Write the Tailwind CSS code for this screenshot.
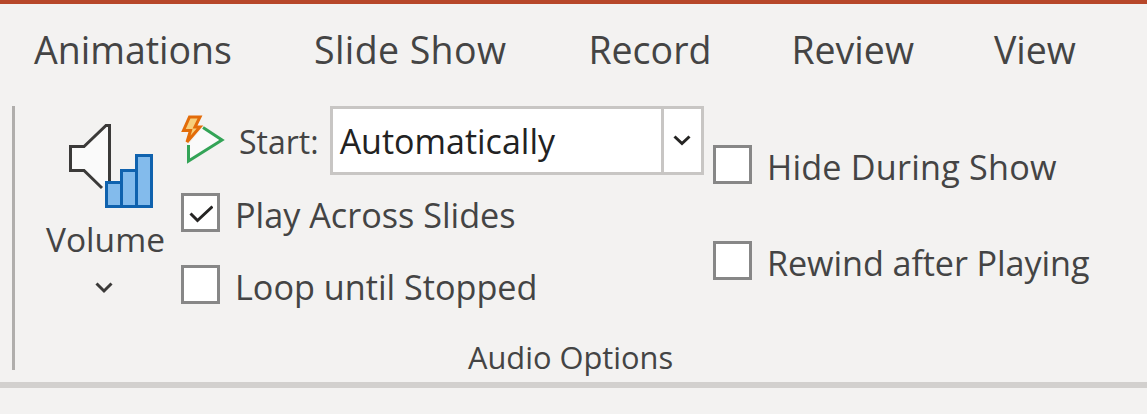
<!DOCTYPE html>
<html lang="en">
<head>
  <meta charset="UTF-8" />
  <title>Audio Options</title>
  <script src="https://cdn.jsdelivr.net/npm/@tailwindcss/browser@4"></script>
</head>
<body class="bg-[#f3f2f1] h-[414px] w-[1147px] overflow-hidden flex flex-col font-['Open_Sans',sans-serif] text-[#444444]">

  <!-- top accent -->
  <div class="h-1 bg-[#b7472a]"></div>

  <!-- tabs -->
  <nav class="h-[102px] pt-[24px] pl-[34px] flex text-[37.500px] leading-[44px]">
    <span>Animations</span>
    <span class="ml-[82px] tracking-[0.4px]">Slide Show</span>
    <span class="ml-[82px]">Record</span>
    <span class="ml-[80px]">Review</span>
    <span class="ml-[80px]">View</span>
  </nav>

  <!-- ribbon group -->
  <section class="h-[264px] ml-3 border-l-[3px] border-[#b0aeac] relative flex">

    <!-- volume -->
    <div class="w-[166px] pl-[31px] flex flex-col items-start">
      <svg class="ml-[23px] mt-[17px]" width="85" height="85" viewBox="0 0 85 85">
        <path d="M1.500 23.500H15L37 2.500H40.500V60H34V65L15 47.500H1.500Z" fill="#fafafa"/>
        <path d="M40.500 58V2.500H37L15 23.500H1.500V47.500H15L33 65" fill="none" stroke="#3b3a39" stroke-width="3"/>
        <path d="M37.500 59.500H52.500V83.500H37.500ZM52.500 47.500H67.500V83.500H52.500ZM67.500 32.500H82.500V83.500H67.500Z" fill="#83bbec" stroke="#0f62ae" stroke-width="3"/>
      </svg>
      <span class="text-[33.500px] leading-[44px] mt-[9px]">Volume</span>
      <svg class="ml-[49px] mt-[21px]" width="18" height="12" viewBox="0 0 18 12"><path d="M1.500 1.500L9 9L16.500 1.500" fill="none" stroke="#3b3a39" stroke-width="3"/></svg>
    </div>

    <!-- start, play, loop -->
    <div class="w-[532px] flex flex-col">
      <div class="flex items-start">
        <svg class="mt-[9px]" width="44" height="52" viewBox="0 0 44 52">
          <path d="M7 30V46L41 25L22 12Z" fill="#fafafa"/>
          <path d="M7.500 30V46L41 25L22 12.500" fill="none" stroke="#33a457" stroke-width="3"/>
          <path d="M8.500 2H19L14 12H19L6 27L9.500 15.500H2.500Z" fill="#f7cf7a" stroke="#e36c09" stroke-width="3"/>
        </svg>
        <span class="text-[32px] leading-[44px] ml-[14px] mt-[14px]">Start:</span>
        <div class="ml-[11px] h-[69px] w-[374px] bg-white border-[3px] border-[#c8c6c4] flex items-center text-[#222222]">
          <span class="flex-1 pl-[7px] text-[34px] leading-[44px]">Automatically</span>
          <div class="w-[40px] h-full border-l-[3px] border-[#c8c6c4] flex items-center justify-center">
            <svg width="18" height="11" viewBox="0 0 18 11"><path d="M1.500 1.500L9 8.500L16.500 1.500" fill="none" stroke="#252423" stroke-width="3"/></svg>
          </div>
        </div>
      </div>
      <label class="flex items-center h-[39px] mt-[18px] gap-[15px] text-[34.200px]">
        <span class="w-[39px] h-[39px] bg-white border-[3px] border-[#878787] flex items-center justify-center">
          <svg width="24" height="20" viewBox="0 0 24 20"><path d="M1.500 10.500L8.500 17.500L23.500 3.500" fill="none" stroke="#252423" stroke-width="3"/></svg>
        </span>
        <span class="relative top-[2px]">Play Across Slides</span>
      </label>
      <label class="flex items-center h-[39px] mt-[33px] gap-[15px] text-[34.200px]">
        <span class="w-[39px] h-[39px] bg-white border-[3px] border-[#878787]"></span>
        <span class="relative top-[2px]">Loop until Stopped</span>
      </label>
    </div>

    <!-- hide, rewind -->
    <div class="flex flex-col">
      <label class="flex items-center h-[39px] mt-[39px] gap-[15px] text-[34.200px]">
        <span class="w-[39px] h-[39px] bg-white border-[3px] border-[#878787]"></span>
        <span class="relative top-[2px] tracking-[0.2px]">Hide During Show</span>
      </label>
      <label class="flex items-center h-[39px] mt-[57px] gap-[15px] text-[34.200px]">
        <span class="w-[39px] h-[39px] bg-white border-[3px] border-[#878787]"></span>
        <span class="relative top-[2px] tracking-[-0.1px]">Rewind after Playing</span>
      </label>
    </div>

    <span class="absolute left-[453px] top-[233px] text-[30.800px] leading-[36px]">Audio Options</span>
  </section>

  <div class="h-[6px] mt-3 bg-[#d2d0ce]"></div>
</body>
</html>
